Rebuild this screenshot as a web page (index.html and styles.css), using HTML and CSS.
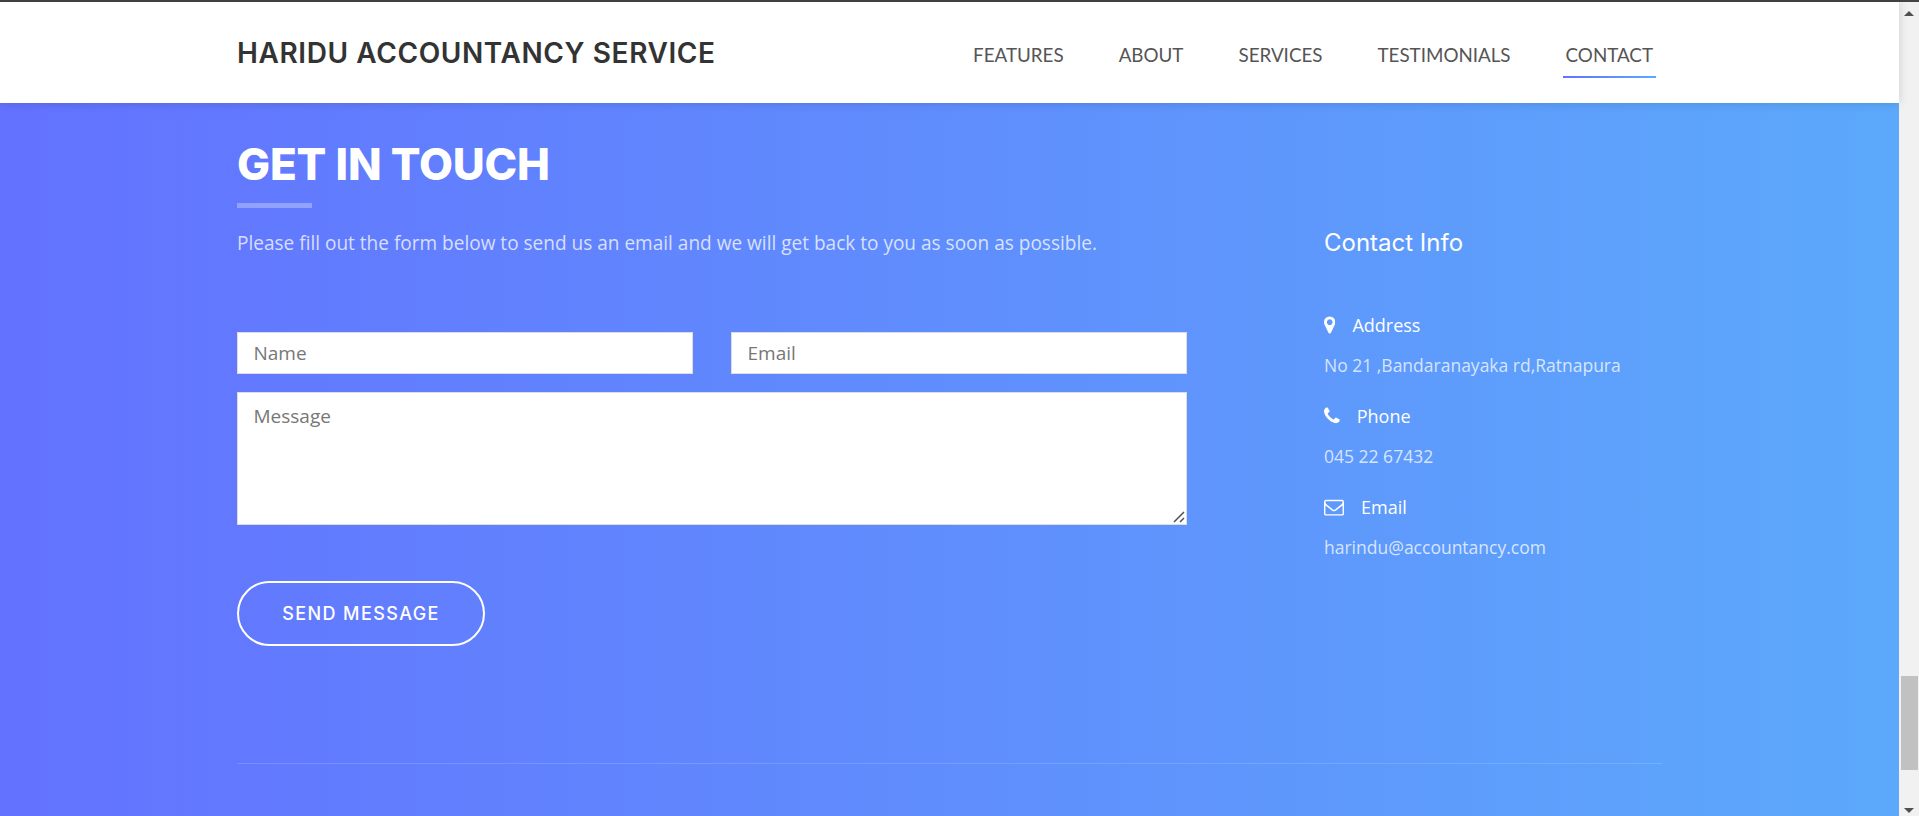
FILE: index.html
```html
<!DOCTYPE html>
<html lang="en">
<head>
<meta charset="utf-8">
<title>Haridu Accountancy Service</title>
<link rel="stylesheet" href="styles.css">
</head>
<body>
<div class="topline"></div>
<div class="viewport">
  <div class="page">
    <header class="navbar">
      <div class="container nav-inner">
        <a class="brand">HARIDU ACCOUNTANCY SERVICE</a>
        <nav class="menu">
          <a class="menu-item">FEATURES</a>
          <a class="menu-item">ABOUT</a>
          <a class="menu-item">SERVICES</a>
          <a class="menu-item">TESTIMONIALS</a>
          <a class="menu-item active">CONTACT</a>
        </nav>
      </div>
    </header>
    <section class="contact">
      <div class="container">
        <div class="columns">
          <div class="form-col">
            <h2 class="title">GET IN TOUCH</h2>
            <div class="title-bar"></div>
            <p class="lead">Please fill out the form below to send us an email and we will get back to you as soon as possible.</p>
            <form class="form">
              <div class="form-row">
                <input class="field" type="text" placeholder="Name">
                <input class="field" type="email" placeholder="Email">
              </div>
              <textarea class="field area" placeholder="Message"></textarea>
              <button class="send" type="button">SEND MESSAGE</button>
            </form>
          </div>
          <aside class="info">
            <h3 class="info-title">Contact Info</h3>
            <div class="info-item">
              <div class="info-label"><svg class="ico" viewBox="0 0 1024 1792"><path d="M768 640q0-106-75-181t-181-75-181 75-75 181 75 181 181 75 181-75 75-181zm256 0q0 109-33 179l-364 774q-16 33-47.5 52t-67.5 19-67.5-19-46.5-52l-365-774q-33-70-33-179 0-212 150-362t362-150 362 150 150 362z"/></svg>Address</div>
              <div class="info-value">No 21 ,Bandaranayaka rd,Ratnapura</div>
            </div>
            <div class="info-item">
              <div class="info-label"><svg class="ico" viewBox="0 0 1408 1792"><path d="M1408 1240q0 27-10 70.5t-21 68.5q-21 50-122 106-94 51-186 51-27 0-53-3.5t-57.5-12.5-47-14.5-55.5-20.5-49-18q-98-35-175-83-127-79-264-216t-216-264q-48-77-83-175-3-9-18-49t-20.5-55.5-14.5-47-12.5-57.5-3.5-53q0-92 51-186 56-101 106-122 25-11 68.5-21t70.5-10q14 0 21 3 18 6 53 76 11 19 30 54t35 63.5 31 53.5q3 4 17.5 25t21.5 35.5 7 28.5q0 20-28.5 50t-62 55-62 53-28.5 46q0 9 5 22.5t8.5 20.5 14 24 11.5 19q76 137 174 235t235 174q2 1 19 11.5t24 14 20.5 8.5 22.5 5q18 0 46-28.5t53-62 55-62 50-28.5q14 0 28.5 7t35.5 21.5 25 17.5q25 15 53.5 31t63.5 35 54 30q70 35 76 53 3 7 3 21z"/></svg>Phone</div>
              <div class="info-value">045 22 67432</div>
            </div>
            <div class="info-item">
              <div class="info-label"><svg class="ico" viewBox="0 0 1792 1792"><path d="M1664 1504v-768q-32 36-69 66-268 206-426 338-51 43-83 67t-86.5 48.5-102.5 24.5h-2q-48 0-102.5-24.5t-86.5-48.5-83-67q-158-132-426-338-37-30-69-66v768q0 13 9.5 22.5t22.5 9.5h1472q13 0 22.5-9.5t9.5-22.5zm0-1051v-24.5l-.5-13-3-12.5-5.5-9-9-7.5-14-2.5h-1472q-13 0-22.5 9.5t-9.5 22.5q0 168 147 284 193 152 401 317 6 5 35 29.5t46 37.5 44.5 31.5 50.5 27.5 43 9h2q20 0 43-9t50.5-27.5 44.5-31.5 46-37.5 35-29.5q208-165 401-317 54-43 100.5-115.5t46.5-131.5zm128-37v1088q0 66-47 113t-113 47h-1472q-66 0-113-47t-47-113v-1088q0-66 47-113t113-47h1472q66 0 113 47t47 113z"/></svg>Email</div>
              <div class="info-value">harindu@accountancy.com</div>
            </div>
          </aside>
        </div>
        <hr class="divider">
      </div>
    </section>
  </div>
  <div class="scrollbar">
    <div class="arrow up"></div>
    <div class="track"><div class="thumb"></div></div>
    <div class="arrow down"></div>
  </div>
</div>
</body>
</html>
```

FILE: styles.css
```css
* { box-sizing: border-box; }
html, body { margin: 0; height: 100%; overflow: hidden; }
body { font-family: "Open Sans", "Liberation Sans", sans-serif; background: #fff; color: #777; }

.topline { height: 2px; background: #444; }
.viewport { display: flex; height: 814px; }
.page { flex: 1; min-width: 0; display: flex; flex-direction: column; }
.container { width: 1425px; margin: 0 auto; }

.navbar { position: relative; z-index: 1; height: 101px; background: #fff; box-shadow: 0 0 10px rgba(0, 0, 0, .15); }
.nav-inner { display: flex; justify-content: space-between; height: 100%; }
.brand { font-family: Inter, "Liberation Sans", sans-serif; font-weight: 600; font-size: 28px; line-height: 32px; letter-spacing: .6px; color: #333; margin-top: 35px; }
.menu { display: flex; gap: 55px; margin-top: 41px; margin-right: 9px; }
.menu-item { font-family: Lato, "Liberation Sans", sans-serif; font-size: 18.8px; line-height: 24px; height: 35px; padding: 0 3px; margin: 0 -3px; color: #555; border-bottom: 2px solid transparent; }
.menu-item.active { border-image: linear-gradient(to right, #6372ff, #5ca9fb) 1; }

.contact { flex: 1; background: linear-gradient(to right, #6372ff 0%, #5ca9fb 100%); color: rgba(255, 255, 255, .75); padding-top: 37px; }
.columns { display: flex; justify-content: space-between; height: 623px; }
.form-col { width: 950px; }
.title { margin: 0; font-family: Inter, "Liberation Sans", sans-serif; font-weight: 800; font-size: 44px; line-height: 48px; letter-spacing: -.2px; color: #fff; }
.title-bar { width: 75px; height: 5px; margin-top: 15px; background: rgba(255, 255, 255, .3); }
.lead { margin: 22px 0 0; font-size: 19.05px; line-height: 26px; }
.form { margin-top: 76px; }
.form-row { display: flex; justify-content: space-between; }
.field { display: block; width: 456px; height: 42px; padding: 6px 15.5px; border: 1px solid #ddd; border-radius: 0; background: #fff; font-family: "Open Sans", "Liberation Sans", sans-serif; font-size: 19px; color: #444; outline: none; }
.field::placeholder { color: #777; opacity: 1; }
.area { width: 950px; height: 133px; margin-top: 18px; padding-top: 10px; }
.area::-webkit-resizer { background: url("data:image/svg+xml,%3Csvg xmlns='http://www.w3.org/2000/svg' width='15' height='15'%3E%3Cpath d='M3 13L13 3M9 13L13 9' stroke='%23505050' stroke-width='1.5'/%3E%3C/svg%3E") no-repeat; }
.send { display: block; width: 248px; height: 65px; margin-top: 56px; border: 2px solid #fff; border-radius: 33px; background: transparent; font-family: Inter, "Liberation Sans", sans-serif; font-weight: 500; font-size: 18px; letter-spacing: 1.4px; color: #fff; }

.info { width: 338px; padding-top: 87px; }
.info-title { margin: 0 0 53px; font-family: Inter, "Liberation Sans", sans-serif; font-weight: 400; font-size: 24px; line-height: 32px; color: #fff; }
.info-item { margin-bottom: 25px; }
.info-label { display: flex; align-items: center; font-size: 18px; line-height: 26px; color: #fff; }
.ico { height: 20px; fill: #fff; margin-right: 17px; flex: none; }
.info-value { margin-top: 14px; font-size: 17.5px; line-height: 26px; }
.divider { margin: 0; border: 0; border-top: 1px solid rgba(255, 255, 255, .15); }

.scrollbar { width: 20px; flex: none; display: flex; flex-direction: column; align-items: center; background: #f1f1f1; }
.track { flex: 1; width: 100%; padding: 0 1px 38px 2px; display: flex; flex-direction: column; justify-content: flex-end; }
.thumb { height: 94px; background: #c1c1c1; }
.arrow { width: 0; height: 0; border-left: 5px solid transparent; border-right: 5px solid transparent; }
.arrow.up { margin-top: 9px; border-bottom: 5px solid #505050; }
.arrow.down { margin-bottom: 3px; border-top: 5px solid #505050; }
```
